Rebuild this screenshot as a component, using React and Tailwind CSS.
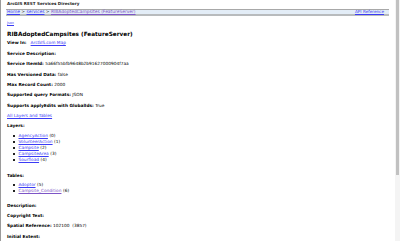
import React from "react";

const layers = [
  ["AgencyAction", 0],
  ["VolunteerAction", 1],
  ["Campsite", 2],
  ["CampsiteArea", 3],
  ["Sourfload", 4],
];

const tables = [
  ["Adoptor", 5, false],
  ["Campsite_Condition", 6, true],
];

const Row = ({ children, className = "" }) => (
  <div className={"h-[10.4px] leading-[10.4px] whitespace-nowrap " + className}>{children}</div>
);

const Item = ({ name, id, visited }) => (
  <li className="flex items-center h-[6.1px] leading-[6.1px] whitespace-nowrap">
    <span className="w-[2px] h-[2px] bg-[#222] mr-[4px]" />
    <a className={visited ? "text-[#7d55c7] underline" : "text-[#3b3bf5] underline"}>{name}</a>
    <span className="ml-[1.5px]">({id})</span>
  </li>
);

export default function App() {
  return (
    <div className="w-[400px] h-[241px] overflow-hidden bg-white flex font-['DejaVu_Sans',sans-serif] text-[4.3px] text-black">
      <div className="w-[1px] bg-[#9a9a9a]" />
      <div className="flex-1 pl-[5px] pr-[6px]">
        <div className="h-[8px] leading-[8px] pl-[1px] font-bold text-[4.1px] text-[#222]">
          ArcGIS REST Services Directory
        </div>
        <div className="mt-[1px] flex justify-between items-center h-[7px] bg-[#e3edf7] border-t border-[#a8a8a8] border-b-2 border-b-[#b8bbbd] pl-[1px] leading-[4px] text-[4.4px]">
          <div className="whitespace-nowrap">
            <a className="text-[#3b3bf5] underline">Home</a> &gt;{" "}
            <a className="text-[#3b3bf5] underline">services</a> &gt;{" "}
            <a className="text-[#7d55c7] underline">RIBAdoptedCampsites (FeatureServer)</a>
          </div>
          <a className="text-[#3b3bf5] underline mr-[5px] text-[4.2px]">API Reference</a>
        </div>
        <div className="pl-[1px]">
          <div className="mt-[4.5px] h-[5px] leading-[5px] text-[3.4px]">
            <a className="text-[#3b3bf5] underline">Json</a>
          </div>
          <div className="mt-[4.2px] h-[8px] leading-[8px] font-bold text-[5.75px] whitespace-nowrap">
            RIBAdoptedCampsites (FeatureServer)
          </div>
          <div className="mt-[0.8px] flex flex-col">
            <Row>
              <b>View In:</b>&nbsp;&nbsp;&nbsp;<a className="text-[#3b3bf5] underline">ArcGIS.com Map</a>
            </Row>
            <Row><b>Service Description:</b></Row>
            <Row><b>Service ItemId:</b> 5a66f55bfb9648b2b91627000904f7aa</Row>
            <Row><b>Has Versioned Data:</b> false</Row>
            <Row><b>Max Record Count:</b> 2000</Row>
            <Row><b>Supported query Formats:</b> JSON</Row>
            <Row><b>Supports applyEdits with GlobalIds:</b> True</Row>
            <Row>
              <a className="text-[#3b3bf5] underline">All Layers and Tables</a>
            </Row>
            <div className="h-[8px] leading-[8px]"><b>Layers:</b></div>
            <ul className="pl-[5.5px] pt-[3px]">
              {layers.map(([n, i]) => (
                <Item key={n} name={n} id={i} />
              ))}
            </ul>
            <div className="mt-[8.8px] h-[8px] leading-[8px]"><b>Tables:</b></div>
            <ul className="pl-[5.5px] pt-[1.65px]">
              {tables.map(([n, i, v]) => (
                <Item key={n} name={n} id={i} visited={v} />
              ))}
            </ul>
            <Row className="mt-[7px]"><b>Description:</b></Row>
            <Row><b>Copyright Text:</b></Row>
            <Row><b>Spatial Reference:</b> 102100&nbsp; (3857)</Row>
            <Row><b>Initial Extent:</b></Row>
          </div>
        </div>
      </div>
      <div className="w-[5px] bg-[#f4f4f4] flex flex-col">
        <div className="h-[175px] ml-[1px] w-[3px] bg-[#c1c1c1]" />
      </div>
    </div>
  );
}
